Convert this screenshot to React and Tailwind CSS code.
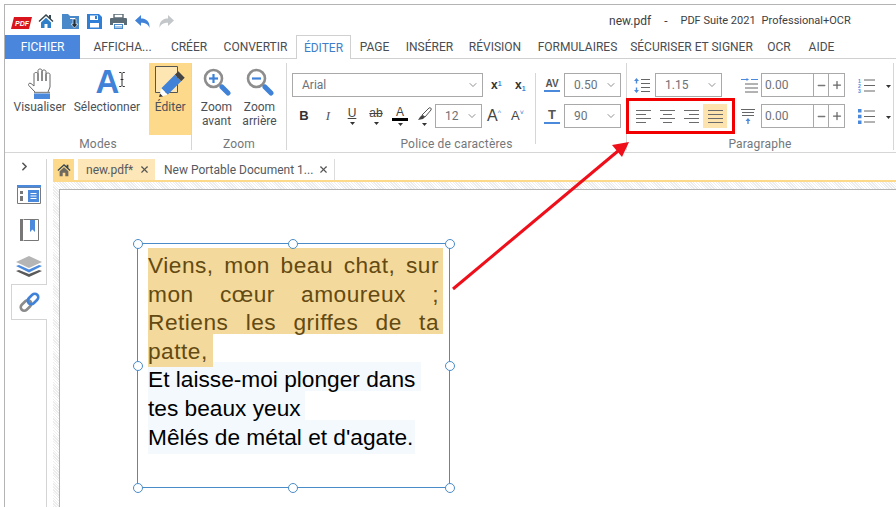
import React from 'react';
import { X, ChevronDown, Minus, Plus, ChevronRight } from 'lucide-react';

const BLUE = '#4a89dc';

const MENU = [
  ['AFFICHA...', 'w-[75px]'],
  ['CRÉER', 'w-[58px]'],
  ['CONVERTIR', 'w-[78px] pr-[3px]'],
  ['ÉDITER', 'w-[55px]'],
  ['PAGE', 'w-[47px]'],
  ['INSÉRER', 'w-[63px]'],
  ['RÉVISION', 'w-[68px]'],
  ['FORMULAIRES', 'w-[97px]'],
  ['SÉCURISER ET SIGNER', 'w-[131px]'],
  ['OCR', 'w-[44px]'],
  ['AIDE', 'w-[41px]'],
];

const PdfLogo = () => (
  <svg width="21" height="12" viewBox="0 0 21 12">
    <path d="M3 0H21L18 12H0Z" fill="#d8141c" />
    <text x="4" y="9" fontSize="7" fontWeight="700" fontStyle="italic" fill="#fff" fontFamily="Liberation Sans">PDF</text>
  </svg>
);

const HomeIcon = ({ color = '#2f7fc9', size = 16 }) => (
  <svg width={size} height={size} viewBox="0 0 16 16">
    <path d="M8 1 0.5 8l1 1L8 3l6.500 6 1-1-2.500-2.300V2h-2v1.800Z" fill="#37474f" />
    <path d="M3 9.500 8 4.800l5 4.700V15h-3.500v-4h-3v4H3Z" fill={color} />
  </svg>
);

const FolderIcon = () => (
  <svg width="17" height="16" viewBox="0 0 17 16">
    <path d="M0 1h6l2 2h9v13H0Z" fill="#4a89c9" />
    <path d="M8 5h5v1H8z" fill="#fff" />
    <path d="M11 6v5H9l3.500 4L16 11h-2V6Z" fill="#263238" stroke="#fff" strokeWidth=".6" />
  </svg>
);

const SaveIcon = () => (
  <svg width="15" height="15" viewBox="0 0 15 15">
    <path d="M0 0h12l3 3v12H0Z" fill="#2f7fd6" />
    <path d="M3 1.500h8V6H3Z M3 9h9v4.500H3Z" fill="#fff" />
    <path d="M8 2h2v3H8Z" fill="#2f7fd6" />
  </svg>
);

const PrintIcon = () => (
  <svg width="17" height="15" viewBox="0 0 17 15">
    <path d="M4 0h9v4H4Z" fill="none" stroke="#5b6b75" strokeWidth="1.400" />
    <path d="M1 4h15a1 1 0 0 1 1 1v6h-3v-2H3v2H0V5a1 1 0 0 1 1-1Z" fill="#5b6b75" />
    <path d="M4 10h9v5H4Z" fill="#4a89c9" />
    <path d="M5 11.500h7M5 13h7" stroke="#fff" />
  </svg>
);

const ArrowIcon = ({ color, flip }) => (
  <svg width="15" height="13" viewBox="0 0 15 13" className={flip ? '-scale-x-100' : ''}>
    <path d="M6 0v3.500c5 0 9 2.500 8.500 9.500-1-3.500-4-5.200-8.500-5.200V11L0 5.500Z" fill={color} />
  </svg>
);

const HandIcon = () => (
  <svg width="23" height="32" viewBox="0 0 23 32" fill="none" stroke="#666" strokeWidth="1" strokeLinejoin="round" className="ml-[-1px]">
    <path d="M7 24 .8 17.500c-1-1.500.6-3 2.200-2L6 18V6c0-2 4-2 4 0v7V2.500c0-2 4-2 4 0V13 3.500c0-2 4-2 4 0V13 6.500c0-2 4-2 4 0V19l-2 5" />
    <path d="M6 24.500h16" stroke="#8a8a8a" strokeWidth="1.400" />
    <path d="M6 25.500h16V31H6Z" fill="#4a89dc" stroke="none" />
  </svg>
);

const SelectIcon = () => (
  <div className="flex h-[28px] mb-[4px] items-start pl-[8px]">
    <span className="text-[33px] leading-[28px] font-bold text-[#3f82d8] font-['Liberation_Sans',sans-serif]">A</span>
    <svg width="8" height="15" viewBox="0 0 8 16" className="mt-[4px] ml-[-1px]" fill="none" stroke="#222">
      <path d="M1 .5h2l1 1 1-1h2M4 1.500v13M1 15.500h2l1-1 1 1h2M2.500 8h3" />
    </svg>
  </div>
);

const EditIcon = () => (
  <svg width="30" height="32" viewBox="0 0 30 32" className="mb-[2px]">
    <path d="M.5.500h22v26H.5Z" fill="#fff" fillOpacity=".35" stroke="#555" />
    <path d="M9.500 25.500 23 12" stroke="#3f82d8" strokeWidth="9" />
    <path d="M23 12l3.500-3.500" stroke="#444" strokeWidth="9" />
    <path d="M6.300 22.300 12.700 28.700 4 31Z" fill="#fff" />
    <path d="M5 27.500 8 30.500 4 31Z" fill="#333" />
  </svg>
);

const ZoomIcon = ({ plus }) => (
  <svg width="28" height="28" viewBox="0 0 28 28" fill="none" className="mb-[4px]">
    <circle cx="10.500" cy="10.500" r="8.500" fill="#fff" stroke="#8d8d8d" strokeWidth="2.600" />
    <path d="M6 10.500h9" stroke="#3f82d8" strokeWidth="2.200" />
    {plus && <path d="M10.500 6v9" stroke="#3f82d8" strokeWidth="2.200" />}
    <path d="M17 17l2 2" stroke="#8d8d8d" strokeWidth="2.500" />
    <path d="M19 19l6 6" stroke="#3f82d8" strokeWidth="5" strokeLinecap="round" />
  </svg>
);

const LargeBtn = ({ w, icon, lines, active }) => (
  <div className={`${w} h-[72px] flex flex-col items-center ${active ? 'bg-[#fdd98b]' : ''}`}>
    <div className="h-[37px] flex items-end justify-center">{icon}</div>
    {lines.map((l) => (
      <span key={l} className="text-[12px] leading-[14px] text-[#4c5157] whitespace-nowrap">{l}</span>
    ))}
  </div>
);

const Group = ({ w, label, children }) => (
  <div className={`${w} h-[87px] mt-[4px] flex flex-col border-r border-[#d6d6d6] shrink-0`}>
    <div className="flex-1 min-h-0">{children}</div>
    <div className="h-[17px] pt-[4px] text-center text-[12px] leading-[14px] tracking-[0.2px] text-[#73777b]">{label}</div>
  </div>
);

const Combo = ({ w, value }) => (
  <div className={`${w} h-[24px] border border-[#a9a9a9] bg-white flex items-center justify-between pl-[9px] pr-[3px] shrink-0`}>
    <span className="text-[12px] text-[#6c7278]">{value}</span>
    <ChevronDown size={12} strokeWidth={1.500} className="text-[#6a6a6a]" />
  </div>
);

const Stepper = ({ value }) => (
  <div className="w-[84px] h-[24px] border border-[#a9a9a9] flex items-center text-[12px] text-[#6c7278] shrink-0">
    <span className="w-[52px] pl-[3px] border-r border-[#a9a9a9] leading-[22px]">{value}</span>
    <span className="w-[15px] h-full flex items-center justify-center border-r border-[#a9a9a9]">
      <Minus size={11} strokeWidth={3} className="text-[#777]" />
    </span>
    <span className="flex-1 flex items-center justify-center">
      <Plus size={12} strokeWidth={2.500} className="text-[#666]" />
    </span>
  </div>
);

const Drop = () => (
  <svg width="5" height="3" viewBox="0 0 5 3" className="mt-[2px]">
    <path d="M0 0h5L2.500 3Z" fill="#333" />
  </svg>
);

const FontBtn = ({ children, drop }) => (
  <div className="w-[24px] h-[24px] flex flex-col items-center justify-center shrink-0">
    {children}
    {drop && <Drop />}
  </div>
);

const AlignIcon = ({ type }) => {
  const rows = {
    left: [[0, 15], [0, 10], [0, 15], [0, 10]],
    center: [[0, 15], [3, 9], [0, 15], [3, 9]],
    right: [[0, 15], [5, 10], [0, 15], [5, 10]],
    justify: [[0, 15], [0, 15], [0, 15], [0, 15]],
  }[type];
  return (
    <svg width="15" height="14" viewBox="0 0 15 14" stroke="#6b6b6b">
      {rows.map(([x, l], i) => (
        <path key={i} d={`M${x} ${1.500 + i * 4}h${l}`} />
      ))}
    </svg>
  );
};

const LineSpacingIcon = () => (
  <svg width="16" height="15" viewBox="0 0 16 15">
    <path d="M7 1.500h9M7 5.500h9M7 9.500h9M7 13.500h9" stroke="#666" />
    <path d="M2.500 0 5 3H3.200v2.500H1.800V3H0ZM2.500 15 5 12H3.200V9.500H1.800V12H0Z" fill={BLUE} />
  </svg>
);

const IndentIcon = () => (
  <svg width="17" height="15" viewBox="0 0 17 15">
    <path d="M10 1.500h7" stroke={BLUE} />
    <path d="M4 6h13M4 10h13M4 14h13" stroke="#666" />
    <path d="M0 1.500h6" stroke={BLUE} />
    <path d="M5.500 0 8 1.500 5.500 3Z" fill={BLUE} />
  </svg>
);

const SpaceBeforeIcon = () => (
  <svg width="14" height="15" viewBox="0 0 14 15">
    <path d="M0 .5h14M1 3.500h12M1 6.500h12" stroke="#666" />
    <path d="M7 9l2.500 3H7.700v3H6.300v-3H4.500Z" fill={BLUE} />
  </svg>
);

const NumListIcon = () => (
  <svg width="17" height="15" viewBox="0 0 17 15">
    <path d="M6 2h11M6 7.500h11M6 13h11" stroke="#666" />
    <text x="0" y="4.500" fontSize="5" fontWeight="700" fill={BLUE} fontFamily="Liberation Sans">1</text>
    <text x="0" y="10" fontSize="5" fontWeight="700" fill={BLUE} fontFamily="Liberation Sans">2</text>
    <text x="0" y="15" fontSize="5" fontWeight="700" fill={BLUE} fontFamily="Liberation Sans">3</text>
  </svg>
);

const BulletIcon = () => (
  <svg width="17" height="15" viewBox="0 0 17 15">
    <path d="M6 2h11M6 7.500h11M6 13h11" stroke="#666" />
    <path d="M0 0h3.500v3.500H0ZM0 5.700h3.500v3.500H0ZM0 11.500h3.500V15H0Z" fill={BLUE} />
  </svg>
);

const PanelIcon = () => (
  <svg width="24" height="19" viewBox="0 0 24 19">
    <path d="M.5 2.500h23v16H.5Z" fill="#fff" stroke="#7a7a7a" />
    <path d="M0 0h24v2.500H0Z" fill={BLUE} />
    <path d="M3 6h3v3H3ZM3 11h3v5H3Z" fill="#777" />
    <path d="M11 5h11v12H11Z" fill={BLUE} />
    <path d="M13.500 8.500h6M13.500 11h6M13.500 13.500h6" stroke="#fff" />
  </svg>
);

const BookmarkIcon = () => (
  <svg width="19" height="22" viewBox="0 0 19 22">
    <path d="M0 0h3v22H0Z" fill="#777" />
    <path d="M3.500.5h15v21h-15" fill="none" stroke="#777" />
    <path d="M10 1h5v12l-2.500-2.500L10 13Z" fill={BLUE} />
  </svg>
);

const LayersIcon = () => (
  <svg width="26" height="21" viewBox="0 0 26 21">
    <path d="M0 15l3-1 10 4 10-4 3 1-13 6Z" fill="#5a5a5a" />
    <path d="M0 10l3-1 10 4.500L23 9l3 1-13 6.500Z" fill={BLUE} />
    <path d="M0 6l13-6 13 6-13 6Z" fill="#b5b5b5" />
  </svg>
);

const LinkIcon = () => (
  <svg width="21" height="21" viewBox="0 0 21 21" fill="none" strokeWidth="2.600">
    <rect x="1" y="10" width="12" height="7" rx="3.500" transform="rotate(-45 7 13.500)" stroke="#8b8b8b" />
    <rect x="8" y="3.500" width="12" height="7" rx="3.500" transform="rotate(-45 14 7)" stroke="#3f82d8" />
  </svg>
);

const Handle = ({ className }) => (
  <span className={`absolute w-[10px] h-[10px] rounded-full bg-white border border-[#4a8cc7] ${className}`} />
);

const ORANGE = [
  'Viens, mon beau chat, sur',
  'mon cœur amoureux ;',
  'Retiens les griffes de ta',
];
const BLUE_LINES = [
  ['Et laisse-moi plonger dans', 'w-[273px] h-[28.6px]'],
  ['tes beaux yeux', 'w-[157px] h-[28.6px]'],
  ["Mêlés de métal et d'agate.", 'w-[267px] h-[34px]'],
];

export default function App() {
  return (
    <div className="relative w-[896px] h-[507px] overflow-hidden bg-white pt-[4px] pl-[4px] font-['Roboto',sans-serif]">
      <div className="h-full border-l border-t border-[#b4b4b4] flex flex-col">
        {/* barre de titre */}
        <div className="h-[30px] flex items-center shrink-0 pt-[2px]">
          <div className="ml-[6px] w-[27px] mt-[4px]"><PdfLogo /></div>
          <div className="w-[24px]"><HomeIcon /></div>
          <div className="w-[25px]"><FolderIcon /></div>
          <div className="w-[23px]"><SaveIcon /></div>
          <div className="w-[25px]"><PrintIcon /></div>
          <div className="w-[24px]"><ArrowIcon color="#3f82d8" /></div>
          <ArrowIcon color="#c4c7ca" flip />
          <span className="ml-[435px] text-[12px] text-[#3c4043]">new.pdf</span>
          <span className="ml-[13px] text-[12px] text-[#3c4043]">-</span>
          <span className="ml-[13px] text-[11px] text-[#3c4043]">PDF Suite 2021</span>
          <span className="ml-[6px] text-[11px] text-[#3c4043]">Professional+OCR</span>
        </div>

        {/* onglets */}
        <div className="h-[24px] flex shrink-0 border-b border-[#d0d0d0] text-[12px]">
          <div className="w-[75px] h-[24px] bg-[#4a86dc] text-white flex items-center justify-center">FICHIER</div>
          <div className="w-[5px]" />
          {MENU.map(([name, w]) => (
            <div
              key={name}
              className={`${w} h-[24px] flex items-center justify-center whitespace-nowrap ${
                name === 'ÉDITER'
                  ? 'border border-b-0 border-[#d0d0d0] bg-white text-[#3f7fc9]'
                  : 'text-[#494d52]'
              }`}
            >
              {name}
            </div>
          ))}
        </div>

        {/* ruban */}
        <div className="h-[94px] flex shrink-0 border-b border-[#d6d6d6] text-[#4c5157]">
          <Group w="w-[187px]" label="Modes">
            <div className="flex pl-[5px]">
              <LargeBtn w="w-[60px]" icon={<HandIcon />} lines={['Visualiser']} />
              <LargeBtn w="w-[76px]" icon={<SelectIcon />} lines={['Sélectionner']} />
              <div className="w-[5px]" />
              <LargeBtn w="w-[42px]" icon={<EditIcon />} lines={['Éditer']} active />
            </div>
          </Group>
          <Group w="w-[95px]" label="Zoom">
            <div className="flex pl-[3px]">
              <LargeBtn w="w-[43px]" icon={<ZoomIcon plus />} lines={['Zoom', 'avant']} />
              <LargeBtn w="w-[43px]" icon={<ZoomIcon />} lines={['Zoom', 'arrière']} />
            </div>
          </Group>

          <Group w="w-[340px]" label="Police de caractères">
            <div className="flex pt-[10px] pl-[5px]">
              <div className="w-[244px] border-r border-[#d6d6d6] h-[71px] flex flex-col gap-[7px]">
                <div className="flex items-center">
                  <Combo w="w-[191px]" value="Arial" />
                  <span className="ml-[8px] w-[24px] text-[12px] font-bold text-[#333] font-['Liberation_Sans',sans-serif]">x<sup className="text-[7px] text-[#3f82d8]">1</sup></span>
                  <span className="w-[16px] text-[12px] font-bold text-[#333] font-['Liberation_Sans',sans-serif]">x<sub className="text-[7px] text-[#3f82d8]">1</sub></span>
                </div>
                <div className="flex items-center">
                  <FontBtn><span className="text-[13px] font-bold text-[#333] font-['Liberation_Sans',sans-serif]">B</span></FontBtn>
                  <FontBtn><span className="text-[13px] italic text-[#555] font-['Liberation_Serif',serif]">I</span></FontBtn>
                  <FontBtn drop><span className="text-[12px] leading-[13px] underline text-[#444] font-['Liberation_Sans',sans-serif]">U</span></FontBtn>
                  <FontBtn drop><span className="text-[12px] leading-[13px] line-through text-[#444] font-['Liberation_Sans',sans-serif]">ab</span></FontBtn>
                  <FontBtn drop>
                    <span className="text-[12px] leading-[11px] text-[#444] font-['Liberation_Sans',sans-serif]">A</span>
                    <span className="w-[16px] h-[3px] bg-black" />
                  </FontBtn>
                  <FontBtn drop>
                    <svg width="15" height="14" viewBox="0 0 15 14">
                      <path d="M5 8 12 1c1-1 3 .5 2 2L8 10Z" fill="#fff" stroke="#555" />
                      <path d="M5 8l3 2-2 2-5 1 2-3Z" fill="#444" />
                    </svg>
                  </FontBtn>
                  <div className="ml-[-1px]"><Combo w="w-[47px]" value="12" /></div>
                  <span className="ml-[5px] w-[24px] text-[16px] text-[#444] font-['Liberation_Sans',sans-serif]">A<span className="text-[7px] align-super text-[#3f82d8]">^</span></span>
                  <span className="text-[13px] text-[#444] font-['Liberation_Sans',sans-serif]">A<span className="text-[7px] align-super text-[#3f82d8]">˅</span></span>
                </div>
              </div>
              <div className="pl-[8px] flex flex-col gap-[7px]">
                <div className="flex items-center gap-[4px]">
                  <div className="w-[16px] flex flex-col items-center text-[10px] leading-[10px] font-bold text-[#555] font-['Liberation_Sans',sans-serif]">
                    AV
                    <span className="w-[16px] h-[2px] bg-[#4a89dc] mt-[1px]" />
                  </div>
                  <Combo w="w-[57px]" value="0.50" />
                </div>
                <div className="flex items-center gap-[4px]">
                  <div className="w-[16px] flex flex-col items-center text-[13px] leading-[13px] font-bold text-[#555] font-['Liberation_Sans',sans-serif]">
                    T
                    <span className="w-[16px] h-[2px] bg-[#4a89dc] mt-[1px]" />
                  </div>
                  <Combo w="w-[57px]" value="90" />
                </div>
              </div>
            </div>
          </Group>

          <Group w="w-[267px]" label="Paragraphe">
            <div className="flex pt-[10px] flex-col gap-[7px]">
              <div className="flex items-center">
                <div className="ml-[7px] w-[21px]"><LineSpacingIcon /></div>
                <Combo w="w-[67px]" value="1.15" />
                <div className="ml-[19px] w-[20px]"><IndentIcon /></div>
                <Stepper value="0.00" />
                <div className="ml-[13px] w-[28px]"><NumListIcon /></div>
                <Drop />
              </div>
              <div className="flex items-center">
                <div className="ml-[4px] w-[24px] flex justify-center"><AlignIcon type="left" /></div>
                <div className="w-[24px] flex justify-center"><AlignIcon type="center" /></div>
                <div className="w-[24px] flex justify-center"><AlignIcon type="right" /></div>
                <div className="w-[24px] h-[24px] bg-[#fde3ae] flex items-center justify-center"><AlignIcon type="justify" /></div>
                <div className="ml-[14px] w-[20px]"><SpaceBeforeIcon /></div>
                <Stepper value="0.00" />
                <div className="ml-[13px] w-[28px]"><BulletIcon /></div>
                <Drop />
              </div>
            </div>
          </Group>
        </div>

        {/* zone de travail */}
        <div className="flex-1 min-h-0 flex pt-[6px]">
          <div className="w-[42px] flex flex-col shrink-0">
            <div className="h-[125px] border-r border-[#d4d4d4] flex flex-col items-center pl-[7px]">
              <ChevronRight size={13} strokeWidth={3} className="text-[#555] mt-[1px] self-start ml-[6px]" />
              <div className="mt-[12px]"><PanelIcon /></div>
              <div className="mt-[15px]"><BookmarkIcon /></div>
              <div className="mt-[15px]"><LayersIcon /></div>
            </div>
            <div className="h-[36px] ml-[6px] border border-r-0 border-[#d4d4d4] flex items-center justify-center">
              <LinkIcon />
            </div>
            <div className="flex-1 border-r border-[#d4d4d4]" />
          </div>

          <div className="flex-1 min-w-0 pl-[6px] flex flex-col">
            <div className="h-[21px] flex items-stretch text-[12px] text-[#555a60] shrink-0">
              <div className="w-[21px] bg-[#fdd98b] flex items-center justify-center"><HomeIcon color="#6e6a5f" size={14} /></div>
              <div className="w-[4px]" />
              <div className="w-[77px] bg-[#fde6b8] flex items-center justify-between pl-[8px] pr-[5px]">
                new.pdf*
                <X size={11} strokeWidth={2.500} className="text-[#555]" />
              </div>
              <div className="w-[180px] border-r border-[#dcdcdc] flex items-center justify-between pl-[9px] pr-[5px] whitespace-nowrap">
                New Portable Document 1...
                <X size={11} strokeWidth={2.500} className="text-[#555]" />
              </div>
            </div>
            <div className="h-[2px] bg-[#fdd98b] shrink-0" />
            <div className="flex-1 min-h-0 pt-[7px] pl-[6px] bg-[repeating-linear-gradient(45deg,#ececec_0,#ececec_1px,#ffffff_1px,#ffffff_2px)]">
              <div className="h-full bg-white border-l border-t border-[#b4b4b4] pt-[53px] pl-[77px]">
                {/* bloc de texte sélectionné */}
                <div className="relative w-[313px] h-[245px] border border-[#4a8cc7] pt-[4px] pl-[10px] text-[22.7px] font-['Liberation_Sans',sans-serif]">
                  {ORANGE.map((line) => (
                    <div key={line} className="w-[295px] h-[28.6px] bg-[#f3d99b] pr-[4px] text-[#634a12] leading-[34px] tracking-[0.5px] text-justify [text-align-last:justify]">
                      {line}
                    </div>
                  ))}
                  <div className="relative w-[65px] h-[33px] -mb-[4.4px] bg-[#f3d99b] text-[#634a12] leading-[34px] tracking-[0.5px]">patte,</div>
                  {BLUE_LINES.map(([line, w]) => (
                    <div key={line} className={`${w} bg-[#f4f9fe] text-black leading-[34px] whitespace-nowrap`}>
                      {line}
                    </div>
                  ))}

                  <Handle className="-left-[5.5px] -top-[5.5px]" />
                  <Handle className="left-[150px] -top-[5.5px]" />
                  <Handle className="-right-[5.5px] -top-[5.5px]" />
                  <Handle className="-left-[5.5px] top-[117px]" />
                  <Handle className="-right-[5.5px] top-[117px]" />
                  <Handle className="-left-[5.5px] -bottom-[5.5px]" />
                  <Handle className="left-[150px] -bottom-[5.5px]" />
                  <Handle className="-right-[5.5px] -bottom-[5.5px]" />
                </div>
              </div>
            </div>
          </div>
        </div>
      </div>

      {/* annotation : cadre et flèche rouges */}
      <div className="absolute left-[626px] top-[98px] w-[109px] h-[36px] border-[3px] border-[#f00000]" />
      <svg className="absolute left-0 top-0 pointer-events-none" width="896" height="507" viewBox="0 0 896 507">
        <path d="M453 289 618 151" stroke="#ee0f1b" strokeWidth="3" />
        <path d="M629 142 622 157 612 145Z" fill="#ee0f1b" />
      </svg>
    </div>
  );
}
